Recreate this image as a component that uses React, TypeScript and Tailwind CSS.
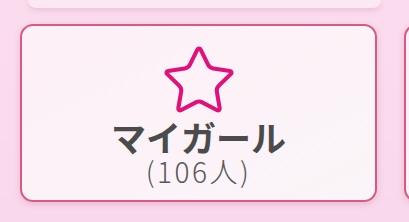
import { Star } from "lucide-react";

function GroupCard({ title, count }: { title: string; count: number }) {
  return (
    <div className="flex h-[178px] w-[357px] shrink-0 flex-col items-center rounded-[13px] border-2 border-[#d65a82] bg-gradient-to-br from-[#fdf0f6] to-[#faf5f8] pt-[16px] shadow-[0_2px_6px_rgba(200,120,160,0.35)]">
      <Star size={78} strokeWidth={1.25} className="text-[#e0117b]" />
      <div className="mt-[-2px] text-[35px] font-bold leading-[38px] text-[#4b4b4b]">
        {title}
      </div>
      <div className="text-[28px] font-light leading-[30px] tracking-[2.5px] text-[#585858]">
        ({count}人)
      </div>
    </div>
  );
}

export default function App() {
  return (
    <div
      className="h-[222px] w-[409px] overflow-hidden bg-gradient-to-b from-[#fbdcee] to-[#f9d8ec]"
      style={{ fontFamily: '"Noto Sans CJK JP", "Noto Sans", sans-serif' }}
    >
      <div className="mx-[28px] h-[8px] rounded-b-[12px] bg-[#fbe8f3] shadow-[0_2px_6px_rgba(200,120,160,0.3)]" />
      <div className="mt-[16px] flex gap-[27px] pl-[20px]">
        <GroupCard title="マイガール" count={106} />
        <GroupCard title="お気に入り" count={12} />
      </div>
    </div>
  );
}
